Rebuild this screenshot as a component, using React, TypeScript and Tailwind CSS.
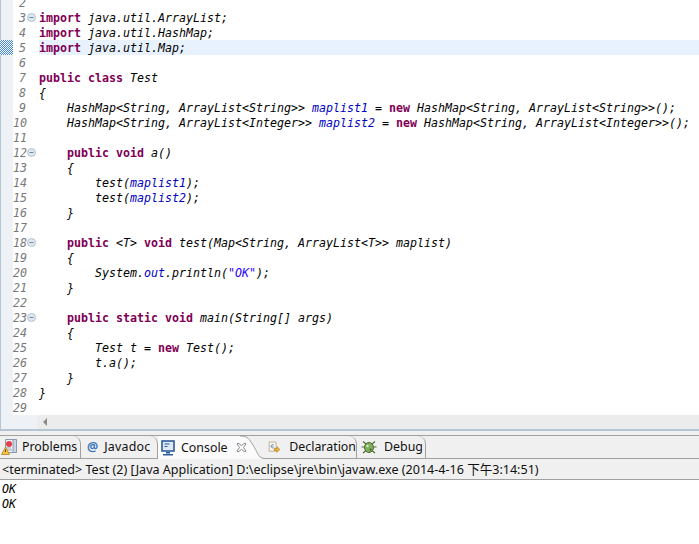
import type { ReactNode } from 'react';

const K = ({ children }: { children: ReactNode }) => <span className="font-bold not-italic text-[#7f0055]">{children}</span>;
const F = ({ children }: { children: ReactNode }) => <span className="text-[#0000c0]">{children}</span>;
const S = ({ children }: { children: ReactNode }) => <span className="text-[#2a00ff]">{children}</span>;
const O = ({ children }: { children: ReactNode }) => <span className="not-italic">{children}</span>;

const LINES: { n: number; fold?: boolean; active?: boolean; code?: ReactNode }[] = [
  { n: 2 },
  { n: 3, fold: true, code: <><K>import</K> java.util.ArrayList;</> },
  { n: 4, code: <><K>import</K> java.util.HashMap;</> },
  { n: 5, active: true, code: <><K>import</K> java.util.Map;</> },
  { n: 6 },
  { n: 7, code: <><K>public</K> <K>class</K> Test</> },
  { n: 8, code: '{' },
  { n: 9, code: <>{'    HashMap<String, ArrayList<String>> '}<F>maplist1</F> <O>=</O> <K>new</K>{' HashMap<String, ArrayList<String>>();'}</> },
  { n: 10, code: <>{'    HashMap<String, ArrayList<Integer>> '}<F>maplist2</F> <O>=</O> <K>new</K>{' HashMap<String, ArrayList<Integer>>();'}</> },
  { n: 11 },
  { n: 12, fold: true, code: <>{'    '}<K>public</K> <K>void</K> a()</> },
  { n: 13, code: '    {' },
  { n: 14, code: <>{'        test('}<F>maplist1</F>);</> },
  { n: 15, code: <>{'        test('}<F>maplist2</F>);</> },
  { n: 16, code: '    }' },
  { n: 17 },
  { n: 18, fold: true, code: <>{'    '}<K>public</K> {'<T>'} <K>void</K>{' test(Map<String, ArrayList<T>> maplist)'}</> },
  { n: 19, code: '    {' },
  { n: 20, code: <>{'        System.'}<F>out</F>.println(<S>"OK"</S>);</> },
  { n: 21, code: '    }' },
  { n: 22 },
  { n: 23, fold: true, code: <>{'    '}<K>public</K> <K>static</K> <K>void</K>{' main(String[] args)'}</> },
  { n: 24, code: '    {' },
  { n: 25, code: <>{'        Test t '}<O>=</O> <K>new</K> Test();</> },
  { n: 26, code: '        t.a();' },
  { n: 27, code: '    }' },
  { n: 28, code: '}' },
  { n: 29 },
];

function FoldIcon() {
  return (
    <svg width="9" height="9" viewBox="0 0 9 9" className="absolute left-[14px] top-[3px]">
      <circle cx="4.5" cy="4.5" r="4" fill="#dfe7ee" stroke="#b4c4d2" />
      <path d="M2.500 4.500h4" stroke="#6f8aa3" strokeWidth="1" />
    </svg>
  );
}

function ProblemsIcon() {
  return (
    <svg width="18" height="18" viewBox="0 0 18 18">
      <path d="M4.500 1.500h11v13h-11z" fill="#f4f4f4" stroke="#8d99ad" />
      <path d="M12 1.500h3.500v13H12z" fill="#c9d4e4" stroke="#8d99ad" />
      <circle cx="8" cy="6" r="3" fill="#e2404a" />
      <path d="M5 10h5M5 12h6" stroke="#9aa7ba" />
      <path d="M4.500 9 8.500 16.500h-8z" fill="#f5c33b" stroke="#b9802a" strokeWidth=".8" />
      <path d="M4.500 11.500v2.500" stroke="#5d3d0a" />
    </svg>
  );
}

function ConsoleIcon() {
  return (
    <svg width="14" height="16" viewBox="0 0 14 16">
      <rect x="1" y="1" width="12" height="10" fill="#dfe9f5" stroke="#2d5c9a" strokeWidth="1.6" />
      <path d="M3.500 4h5M3.500 6.500h3" stroke="#2d5c9a" />
      <path d="M5 12h4v1.500H5zM2 14h10v1.500H2z" fill="#2d5c9a" />
    </svg>
  );
}

function CloseIcon() {
  return (
    <svg width="11" height="11" viewBox="0 0 11 11">
      <path
        d="M1 2 2 1 5.500 3.500 9 1 10 2 7.500 5.500 10 9 9 10 5.500 7.500 2 10 1 9 3.500 5.500z"
        fill="#fbfbfb"
        stroke="#8a8a8a"
        strokeWidth="1"
      />
    </svg>
  );
}

function DeclarationIcon() {
  return (
    <svg width="16" height="16" viewBox="0 0 16 16">
      <path d="M1.500 1.500h9v12h-9z" fill="#fbf7ec" stroke="#b0a078" />
      <path d="M7.500 5.200A2.200 2.200 0 1 0 7.500 8.800" fill="none" stroke="#4f7fb8" strokeWidth="1.200" />
      <path d="M5 7h2" stroke="#4f7fb8" />
      <path d="M8 10h3.500V7.500l4 3.700-4 3.800v-2.500H8z" fill="#eeb13d" stroke="#b37a1e" strokeWidth=".8" />
    </svg>
  );
}

function DebugIcon() {
  return (
    <svg width="16" height="16" viewBox="0 0 16 16">
      <path d="M2 2.500l3 2.500M14 2.500l-3 2.500M.5 8H4M12 8h3.500M2 14l3-2.500M14 14l-3-2.500" stroke="#4d6b3a" strokeWidth="1.200" />
      <ellipse cx="8" cy="8.500" rx="4.500" ry="5" fill="#7fae5c" stroke="#47692f" />
      <circle cx="6.500" cy="7" r="1.200" fill="#d5e8bd" />
      <circle cx="9.500" cy="10.500" r="1" fill="#3f6429" />
    </svg>
  );
}

const TAB_FONT = "[font-family:'Noto_Sans','Noto_Sans_CJK_SC',sans-serif]";
const MONO = "italic text-[11.63px] leading-[15px] [font-family:'DejaVu_Sans_Mono',monospace]";

export default function App() {
  return (
    <div className="w-[699px] h-[544px] bg-white overflow-hidden flex flex-col">
      {/* editor */}
      <div className="h-[415px] flex flex-col justify-end overflow-hidden bg-white shrink-0">
        {LINES.map((line) => (
          <div key={line.n} className="h-[15px] shrink-0 flex">
            <div
              className={
                line.active
                  ? 'w-[13px] shrink-0 bg-[repeating-conic-gradient(#3f86e0_0_25%,#ffffff_0_50%)] bg-[length:2px_2px]'
                  : 'w-[13px] shrink-0 bg-[#eef2f7] border-l border-[#b5c5d3]'
              }
            />
            <div className="relative w-[26px] shrink-0 bg-white">
              <div className={`w-[13px] pt-[1px] text-right text-[#787878] ${MONO}`}>{line.n}</div>
              {line.fold && <FoldIcon />}
            </div>
            <pre className={line.active ? `flex-1 pt-[1px] text-black bg-[#e8f2fe] ${MONO}` : `flex-1 pt-[1px] text-black ${MONO}`}>
              {line.code}
            </pre>
          </div>
        ))}
      </div>

      {/* horizontal scrollbar */}
      <div className="h-[14px] shrink-0 flex">
        <div className="w-[37px] shrink-0 bg-[#eef2f7] border-l border-[#b5c5d3]" />
        <div className="flex-1 bg-[#ececec] flex items-center pl-[6px]">
          <div className="w-0 h-0 border-y-[4px] border-y-transparent border-r-[4px] border-r-[#8a8a8a]" />
        </div>
      </div>
      <div className="h-[2px] shrink-0 bg-[#b5c5d3]" />
      <div className="h-[4px] shrink-0 bg-[#f0f0f0]" />

      {/* tab bar */}
      <div className={`h-[24px] shrink-0 flex bg-[#f0f0f0] border-y border-[#a0a0a0] text-[12.4px] leading-[22px] text-[#111111] ${TAB_FONT}`}>
        <div className="w-[81px] shrink-0 flex items-center gap-[3px] pl-[1px] border-r border-[#a0a0a0] rounded-tr-[8px]">
          <ProblemsIcon />
          <span>Problems</span>
        </div>
        <div className="w-[77px] shrink-0 flex items-center gap-[6px] pl-[6px] border-r border-[#a0a0a0] rounded-tr-[8px]">
          <span className="text-[#3b78b8] font-bold">@</span>
          <span className="tracking-[0.25px]">Javadoc</span>
        </div>
        <div className="relative w-[104px] shrink-0 flex items-center gap-[6px] pl-[3px] bg-[#fbfbfb] -mb-px z-10">
          <ConsoleIcon />
          <span>Console</span>
          <span className="ml-[2px]">
            <CloseIcon />
          </span>
          <svg width="24" height="24" viewBox="0 0 24 24" className="absolute -right-[2px] top-0">
            <path d="M0 0C8 0 9 3 13 9S18 23 24 23V24H24V0Z" fill="#f0f0f0" />
            <path d="M0 0C8 0 9 3 13 9S18 22 24 22.500" fill="none" stroke="#a0a0a0" />
          </svg>
        </div>
        <div className="w-[95px] shrink-0 flex items-center gap-[9px] pl-[6px] border-r border-[#a0a0a0] rounded-tr-[8px]">
          <DeclarationIcon />
          <span>Declaration</span>
        </div>
        <div className="w-[69px] shrink-0 flex items-center gap-[7px] pl-[4px] border-r border-[#a0a0a0] rounded-tr-[8px]">
          <DebugIcon />
          <span>Debug</span>
        </div>
      </div>

      {/* console toolbar */}
      <div className={`h-[21px] shrink-0 bg-[#f0f0f0] border-b border-[#a0a0a0] pl-[2px] text-[12.55px] leading-[22px] text-[#111111] whitespace-nowrap ${TAB_FONT}`}>
        {'<terminated> Test (2) [Java Application] D:\\eclipse\\jre\\bin\\javaw.exe (2014-4-16 下午3:14:51)'}
      </div>

      {/* console output */}
      <pre className={`flex-1 pt-[2px] pl-[2px] text-black ${MONO}`}>{'OK\nOK'}</pre>
    </div>
  );
}
